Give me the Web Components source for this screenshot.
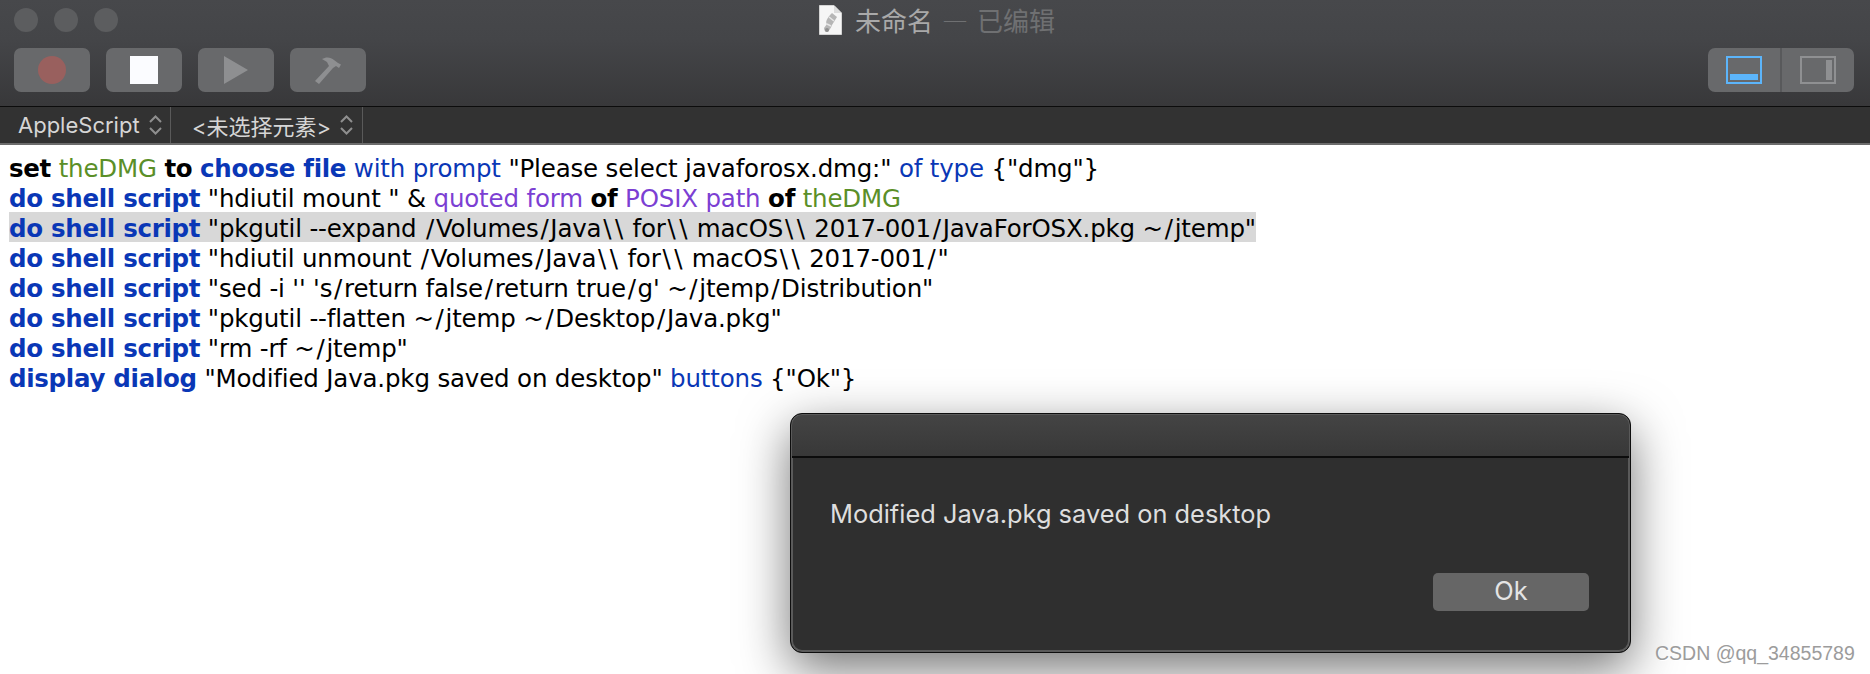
<!DOCTYPE html>
<html lang="zh">
<head>
<meta charset="utf-8">
<title>未命名</title>
<style>
  html, body { margin: 0; height: 100%; background: #fff; overflow: hidden; }
</style>
</head>
<body>
<script-window>
  <window-titlebar slot="top" name="未命名" status="— 已编辑"></window-titlebar>
  <window-toolbar slot="top"></window-toolbar>
  <nav-bar slot="top"></nav-bar>
  <code-view>
    <code-line><b>set</b> <i class="v">theDMG</i> <b>to</b> <b class="k">choose file</b> <span class="k">with prompt</span> "Please select javaforosx.dmg:" <span class="k">of type</span> {"dmg"}</code-line>
    <code-line><b class="k">do shell script</b> "hdiutil mount " &amp; <span class="p">quoted form</span> <b>of</b> <span class="p">POSIX path</span> <b>of</b> <i class="v">theDMG</i></code-line>
    <code-line selected><b class="k">do shell script</b> "pkgutil --expand /Volumes/Java\\ for\\ macOS\\ 2017-001/JavaForOSX.pkg ~/jtemp"</code-line>
    <code-line><b class="k">do shell script</b> "hdiutil unmount /Volumes/Java\\ for\\ macOS\\ 2017-001/"</code-line>
    <code-line><b class="k">do shell script</b> "sed -i '' 's/return false/return true/g' ~/jtemp/Distribution"</code-line>
    <code-line><b class="k">do shell script</b> "pkgutil --flatten ~/jtemp ~/Desktop/Java.pkg"</code-line>
    <code-line><b class="k">do shell script</b> "rm -rf ~/jtemp"</code-line>
    <code-line><b class="k">display dialog</b> "Modified Java.pkg saved on desktop" <span class="k">buttons</span> {"Ok"}</code-line>
  </code-view>
  <alert-dialog slot="over" button="Ok">Modified Java.pkg saved on desktop</alert-dialog>
  <water-mark slot="over">CSDN @qq_34855789</water-mark>
</script-window>

<script>
class ScriptWindow extends HTMLElement {
  constructor() {
    super();
    this.attachShadow({ mode: "open" });
    this.shadowRoot.innerHTML = `
<style>
  :host { display: flex; flex-direction: column; height: 674px; position: relative; overflow: hidden; }
  .top { display: block; }
</style>
<div class="top"><slot name="top"></slot></div>
<slot></slot>
<slot name="over"></slot>`;
  }
}

class WindowTitlebar extends HTMLElement {
  constructor() {
    super();
    this.attachShadow({ mode: "open" });
    this.shadowRoot.innerHTML = `
<style>
  :host { display: grid; grid-template-columns: 1fr auto 1fr; align-items: center; height: 40px; padding: 0 14px;
    background: linear-gradient(#47484b, #444548); box-sizing: border-box; }
  .dots { display: flex; gap: 16px; }
  .dots span { width: 24px; height: 24px; border-radius: 50%; background: #5c5d5f; }
  .title { display: flex; align-items: center; margin-left: 4px; font: 26px "Noto Sans CJK SC", "Liberation Sans", sans-serif; color: #a9a9a9; line-height: 40px; white-space: nowrap; }
  .title svg { margin-right: 13px; margin-top: -1px; }
  .status { color: #6f7072; margin-left: 9px; word-spacing: 3px; }
</style>
<div class="dots"><span></span><span></span><span></span></div>
<div class="title">
  <svg width="23" height="30" viewBox="0 0 23 30">
    <path d="M.5.500H15L22.500 8V29.500H.5Z" fill="#f6f6f6" stroke="#d4d4d4"/>
    <path d="M15 .5V8H22.500Z" fill="#dcdcdc"/>
    <path d="M13 8L18 12 13 20C12 23 10 26 8 27 6 27 5 25 5 23L8 19C6 17 8 13 13 8Z" fill="#b6b6b6"/>
    <path d="M10 12L15 16M8 19L12 21" stroke="#e6e6e6" stroke-width="1.500" fill="none"/>
    <circle cx="8" cy="25" r="2" fill="#8e8e8e"/>
  </svg>
  <span id="name"></span><span class="status" id="status"></span>
</div>
<div></div>`;
  }
  connectedCallback() {
    this.shadowRoot.getElementById("name").textContent = this.getAttribute("name");
    this.shadowRoot.getElementById("status").textContent = this.getAttribute("status");
  }
}

class ToolButton extends HTMLElement {
  constructor() {
    super();
    this.attachShadow({ mode: "open" });
    this.shadowRoot.innerHTML = `
<style>
  :host { display: flex; align-items: center; justify-content: center; width: 76px; height: 44px; border-radius: 7px; background: #68696b; }
</style>
<slot></slot>`;
  }
}

class WindowToolbar extends HTMLElement {
  constructor() {
    super();
    this.attachShadow({ mode: "open" });
    this.shadowRoot.innerHTML = `
<style>
  :host { display: flex; align-items: flex-start; gap: 16px; height: 67px; padding: 8px 16px 0 14px; box-sizing: border-box;
    background: linear-gradient(#444548, #38383a); border-bottom: 1px solid #0c0c0c; }
  .seg { display: flex; margin-left: auto; width: 146px; height: 44px; border-radius: 7px; background: #68696b; }
  .seg div { flex: 1; display: flex; align-items: center; justify-content: center; }
  .seg div + div { border-left: 2px solid #58595b; }
</style>
<tool-button>
  <svg width="28" height="28"><circle cx="14" cy="14" r="14" fill="#99605e"/></svg>
</tool-button>
<tool-button>
  <svg width="28" height="28"><rect width="28" height="28" fill="#fbfcff"/></svg>
</tool-button>
<tool-button>
  <svg width="24" height="28"><path d="M0 0L24 14 0 28Z" fill="#8e8f91"/></svg>
</tool-button>
<tool-button>
  <svg width="28" height="28" viewBox="0 0 28 28"><path d="M1 25L15 10 13 6 8 3C12 .5 17 1 20 4L24 7 27 8.500 25 12 22 10 19 12 5 28Z" fill="#8e8f91"/></svg>
</tool-button>
<div class="seg">
  <div>
    <svg width="36" height="28"><rect x="1" y="1" width="34" height="26" fill="none" stroke="#5cb5fb" stroke-width="2"/><rect x="4" y="18" width="28" height="6" fill="#5cb5fb"/></svg>
  </div>
  <div>
    <svg width="36" height="28"><rect x="1" y="1" width="34" height="26" fill="none" stroke="#8f9092" stroke-width="2"/><rect x="26" y="4" width="6" height="20" fill="#8f9092"/></svg>
  </div>
</div>`;
  }
}

class NavBar extends HTMLElement {
  constructor() {
    super();
    this.attachShadow({ mode: "open" });
    const updown = `<svg width="13" height="20" viewBox="0 0 13 20" fill="none" stroke="#8f8f8f" stroke-width="2"><path d="M1 7L6.500 1.500 12 7M1 13L6.500 18.500 12 13"/></svg>`;
    this.shadowRoot.innerHTML = `
<style>
  :host { display: flex; height: 38px; background: #323232; border-bottom: 2px solid #6c6c6c; box-sizing: border-box;
    font: 22px Inter, "Noto Sans CJK SC", sans-serif; color: #d6d6d6; }
  .item { display: flex; align-items: center; gap: 9px; height: 36px; border-right: 1px solid #5a5a5a; white-space: nowrap; box-sizing: border-box; }
  .a { width: 171px; padding-left: 18px; }
  .b { width: 192px; padding-left: 21px; }
</style>
<div class="item a"><span>AppleScript</span>${updown}</div>
<div class="item b"><span>&lt;未选择元素&gt;</span>${updown}</div>`;
  }
}

class CodeView extends HTMLElement {
  constructor() {
    super();
    this.attachShadow({ mode: "open" });
    this.shadowRoot.innerHTML = `
<style>
  :host { display: block; padding: 7px 0 0 9px; background: #fff; font: 24.500px "DejaVu Sans", Verdana, sans-serif; color: #000; }
</style>
<slot></slot>`;
  }
}

class CodeLine extends HTMLElement {
  constructor() {
    super();
    this.attachShadow({ mode: "open" });
    this.shadowRoot.innerHTML = `
<style>
  :host { display: block; width: max-content; height: 30px; line-height: 33px; white-space: nowrap; letter-spacing: -.17px; }
  :host([selected]) { background: #d8d8d8; }
  ::slotted(b) { font-weight: 700; letter-spacing: -.3px; }
  ::slotted(i) { font-style: normal; color: #5b8f28; }
  ::slotted(.k) { color: #0a37b6; }
  ::slotted(.p) { color: #7c3fd3; }
  ::slotted(.w) { padding: 0 .075em; }
</style>
<slot></slot>`;
  }
  connectedCallback() {
    // Verdana's slashes are wider than DejaVu's, pad them
    for (const node of [...this.childNodes]) {
      if (node.nodeType !== 3 || !/[\/\\]/.test(node.data)) continue;
      const frag = document.createDocumentFragment();
      for (const part of node.data.split(/([\/\\])/)) {
        if (part === "/" || part === "\\") {
          const s = document.createElement("span");
          s.className = "w";
          s.textContent = part;
          frag.append(s);
        } else if (part) {
          frag.append(part);
        }
      }
      node.replaceWith(frag);
    }
  }
}

class AlertDialog extends HTMLElement {
  constructor() {
    super();
    this.attachShadow({ mode: "open" });
    this.shadowRoot.innerHTML = `
<style>
  :host { display: flex; flex-direction: column; position: absolute; left: 790px; top: 413px; width: 841px; height: 240px; box-sizing: border-box;
    border: 1px solid #0e0e0e; border-radius: 12px; background: #2f2f2f;
    box-shadow: inset 0 0 0 2px #5a5a5a, 0 16px 50px rgba(0,0,0,.55); font: 25.400px Inter, "Liberation Sans", sans-serif; color: #dedede; }
  .head { height: 43px; flex: none; box-sizing: border-box; background: linear-gradient(#444, #383838); border-bottom: 2px solid #0c0c0c; margin: 1px 1px 0; border-radius: 10px 10px 0 0; }
  .body { flex: 1; display: flex; flex-direction: column; padding: 41px 41px 41px 39px; }
  .msg { line-height: 30px; }
  .actions { margin-top: auto; display: flex; justify-content: flex-end; }
  .btn { width: 156px; height: 38px; line-height: 36px; text-align: center; background: #666; border-radius: 5px; color: #e4e4e4; }
</style>
<div class="head"></div>
<div class="body">
  <div class="msg"><slot></slot></div>
  <div class="actions"><div class="btn" id="btn"></div></div>
</div>`;
  }
  connectedCallback() {
    this.shadowRoot.getElementById("btn").textContent = this.getAttribute("button");
  }
}

class WaterMark extends HTMLElement {
  constructor() {
    super();
    this.attachShadow({ mode: "open" });
    this.shadowRoot.innerHTML = `
<style>
  :host { position: absolute; left: 1655px; top: 641px; font: 19.500px "Liberation Sans", sans-serif; line-height: 24px; color: #9c9c9c; white-space: nowrap;
    text-shadow: 1px 1px 0 #fff; }
</style>
<slot></slot>`;
  }
}

customElements.define("script-window", ScriptWindow);
customElements.define("window-titlebar", WindowTitlebar);
customElements.define("tool-button", ToolButton);
customElements.define("window-toolbar", WindowToolbar);
customElements.define("nav-bar", NavBar);
customElements.define("code-view", CodeView);
customElements.define("code-line", CodeLine);
customElements.define("alert-dialog", AlertDialog);
customElements.define("water-mark", WaterMark);
</script>
</body>
</html>
